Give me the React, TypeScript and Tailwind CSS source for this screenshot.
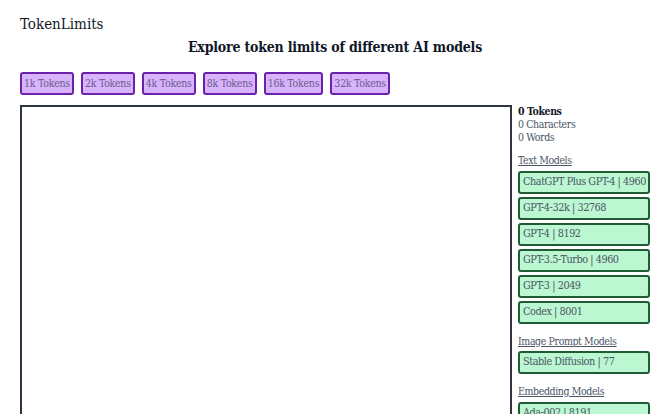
import React from "react";

const sizes = ["1k", "2k", "4k", "8k", "16k", "32k"];

const textModels = [
  "ChatGPT Plus GPT-4 | 4960",
  "GPT-4-32k | 32768",
  "GPT-4 | 8192",
  "GPT-3.5-Turbo | 4960",
  "GPT-3 | 2049",
  "Codex | 8001",
];

const ModelButton: React.FC<{ label: string }> = ({ label }) => (
  <button
    type="button"
    className="h-[23px] w-full text-left px-[3px] text-[10.8px] tracking-[-0.45px] leading-none text-gray-600 bg-[#bbf7d0] border-2 border-[#1f5c36] rounded-[3px] whitespace-nowrap overflow-hidden"
  >
    {label}
  </button>
);

export default function App() {
  return (
    <div
      className="w-[650px] h-[414px] overflow-hidden bg-white text-gray-900"
      style={{ fontFamily: '"DejaVu Serif Condensed", "DejaVu Serif", serif' }}
    >
      <div className="pl-5 pt-[14px]">
        <h1 className="text-[15px] leading-[20px] text-gray-900">TokenLimits</h1>
        <h2 className="mt-[2px] text-center text-[14px] tracking-[-0.2px] leading-[22px] font-bold text-gray-900">
          Explore token limits of different AI models
        </h2>
        <div className="mt-[14px] flex gap-[7px]">
          {sizes.map((s) => (
            <button
              key={s}
              type="button"
              className="h-[23px] px-[2px] text-[10.5px] tracking-[-0.25px] leading-none text-[#6d5a86] bg-[#d8b4fe] border-2 border-[#6b21a8] rounded-[3px] whitespace-nowrap"
            >
              {s} Tokens
            </button>
          ))}
        </div>
        <div className="mt-[10px] flex gap-[6px]">
          <textarea className="w-[492px] h-[330px] shrink-0 border-2 border-[#2d3442] resize-none" />
          <div className="w-[132px] shrink-0 text-[10.5px] tracking-[-0.4px] leading-[13px]">
            <div className="font-bold text-gray-900">0 Tokens</div>
            <div className="text-gray-600">0 Characters</div>
            <div className="text-gray-600">0 Words</div>
            <div className="mt-[10px] text-gray-600 underline">Text Models</div>
            <div className="mt-[4px] flex flex-col gap-[3px]">
              {textModels.map((m) => (
                <ModelButton key={m} label={m} />
              ))}
            </div>
            <div className="mt-[11px] text-gray-600 underline">Image Prompt Models</div>
            <div className="mt-[3px]">
              <ModelButton label="Stable Diffusion | 77" />
            </div>
            <div className="mt-[11px] text-gray-600 underline">Embedding Models</div>
            <div className="mt-[4px]">
              <ModelButton label="Ada-002 | 8191" />
            </div>
          </div>
        </div>
      </div>
    </div>
  );
}
